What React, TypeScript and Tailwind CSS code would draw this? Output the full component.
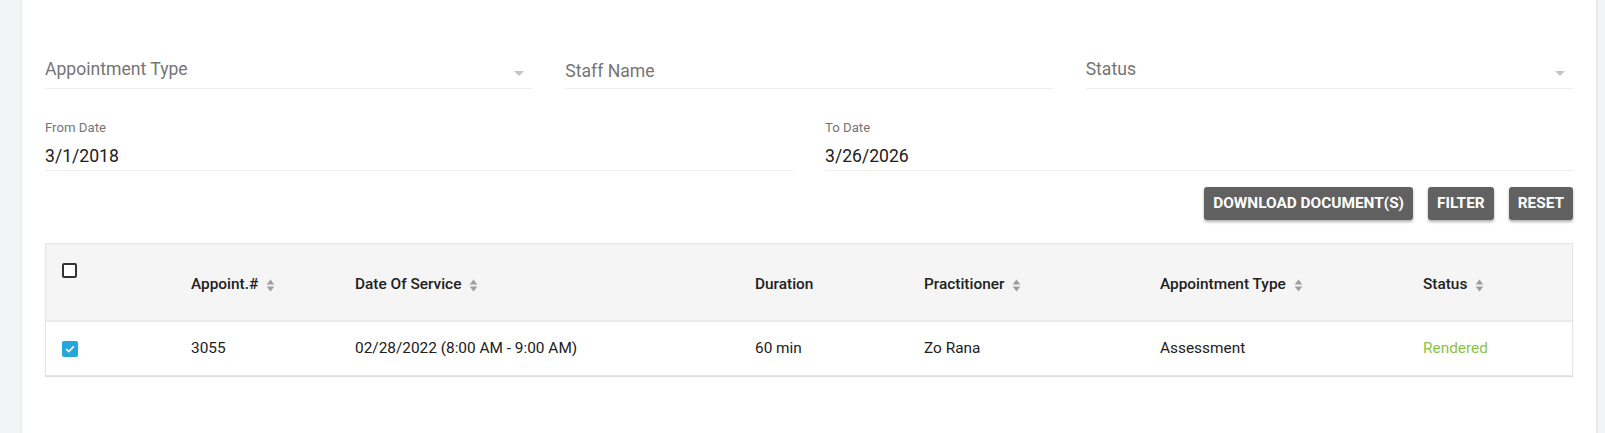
import React from "react";

const font = { fontFamily: "Roboto, 'Liberation Sans', sans-serif" };

function SortIcon() {
  return (
    <svg viewBox="0 0 8 12" className="ml-[8px] h-[13px] w-[9px] shrink-0" fill="#9e9e9e">
      <path d="M4 0.5L7.5 5H0.5z" />
      <path d="M4 11.5L7.5 7H0.5z" />
    </svg>
  );
}

function Caret() {
  return <span className="block h-0 w-0 border-x-[5px] border-t-[5px] border-x-transparent border-t-[#c4c4c4]" />;
}

function SelectField({ label }: { label: string }) {
  return (
    <div className="flex h-[33px] items-start justify-between border-b border-[#eeeeee]">
      <span className="text-[17.6px] leading-[26px] text-[#757575]">{label}</span>
      <span className="mr-[8px] mt-[15px]">
        <Caret />
      </span>
    </div>
  );
}

function DateField({ label, value }: { label: string; value: string }) {
  return (
    <div className="flex flex-col border-b border-[#eeeeee] pb-[1px]">
      <span className="text-[13.2px] leading-[18px] text-[#757575]">{label}</span>
      <span className="mt-[6px] text-[17.6px] leading-[26px] text-[#212121]">{value}</span>
    </div>
  );
}

const cols = "grid grid-cols-[145px_164px_400px_169px_236px_263px_1fr]";

const headers: { label: string; sort: boolean }[] = [
  { label: "Appoint.#", sort: true },
  { label: "Date Of Service", sort: true },
  { label: "Duration", sort: false },
  { label: "Practitioner", sort: true },
  { label: "Appointment Type", sort: true },
  { label: "Status", sort: true },
];

export default function App() {
  return (
    <div className="flex h-[433px] w-[1605px] bg-[#f3f4f6]" style={font}>
      <div className="ml-[22px] w-[1574px] bg-white pl-[23px] pr-[23px] pt-[56px] shadow-[-1px_0_0_#e8e9eb]">
        <div className="grid grid-cols-3 gap-x-[33px]">
          <SelectField label="Appointment Type" />
          <div className="flex h-[33px] items-start border-b border-[#eeeeee] pt-[2px]">
            <span className="text-[17.6px] leading-[26px] text-[#757575]">Staff Name</span>
          </div>
          <SelectField label="Status" />
        </div>

        <div className="mt-[30px] grid grid-cols-2 gap-x-[32px]">
          <DateField label="From Date" value="3/1/2018" />
          <DateField label="To Date" value="3/26/2026" />
        </div>

        <div className="mt-[16px] flex justify-end gap-[15px]">
          {["DOWNLOAD DOCUMENT(S)", "FILTER", "RESET"].map((b) => (
            <button
              key={b}
              className="h-[33px] rounded-[3px] bg-[#616161] px-[9px] text-[15.4px] font-bold text-white shadow-[0_2px_3px_rgba(0,0,0,0.3)]"
            >
              {b}
            </button>
          ))}
        </div>

        <div className="mt-[23px] border border-[#e6e6e6] shadow-[0_1px_1px_rgba(0,0,0,0.12)]">
          <div className={`${cols} h-[76px] bg-[#f5f5f5] text-[15.4px] font-medium text-[#212121]`}>
            <div className="pl-[16px] pt-[19px]">
              <span className="block h-[15px] w-[15px] rounded-[2px] border-2 border-[#333333] bg-white" />
            </div>
            {headers.map((h) => (
              <div key={h.label} className="flex items-center pt-[6px]">
                <span>{h.label}</span>
                {h.sort && <SortIcon />}
              </div>
            ))}
          </div>
          <div className={`${cols} h-[55px] border-t-2 border-[#ebebeb] text-[15.4px] text-[#212121]`}>
            <div className="flex items-center pl-[16px]">
              <span className="flex h-[16px] w-[16px] items-center justify-center rounded-[2px] bg-[#26a6dc]">
                <svg viewBox="0 0 12 12" className="h-[12px] w-[12px]" fill="none" stroke="white" strokeWidth="1.6">
                  <path d="M2.2 6.2L4.8 8.6L9.8 3.4" />
                </svg>
              </span>
            </div>
            <div className="flex items-center">3055</div>
            <div className="flex items-center">02/28/2022 (8:00 AM - 9:00 AM)</div>
            <div className="flex items-center">60 min</div>
            <div className="flex items-center">Zo Rana</div>
            <div className="flex items-center">Assessment</div>
            <div className="flex items-center text-[#8bc34a]">Rendered</div>
          </div>
        </div>
      </div>
      <div className="w-[2px] bg-[#e9eaec]" />
    </div>
  );
}
